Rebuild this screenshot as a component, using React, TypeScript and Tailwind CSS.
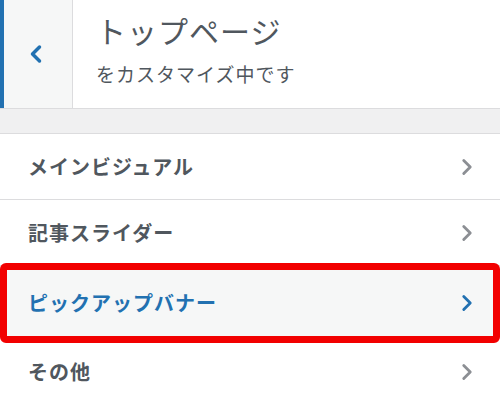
import { ChevronLeft, ChevronRight } from 'lucide-react'

const items = [
  { label: 'メインビジュアル' },
  { label: '記事スライダー' },
]

const jp = { fontFamily: '"Noto Sans CJK JP", "Noto Sans", sans-serif' }

const Row = ({ label }: { label: string }) => (
  <div className="flex h-[66px] items-center justify-between border-b border-[#dcdcde] bg-white pl-[28px] pr-[20px]">
    <span className="text-[20px] font-bold tracking-[1px] text-[#50575e]">{label}</span>
    <ChevronRight className="h-[26px] w-[26px] text-[#8c8f94]" strokeWidth={2.6} />
  </div>
)

export default function App() {
  return (
    <div className="h-[406px] w-[500px] overflow-hidden bg-white" style={jp}>
      {/* header */}
      <div className="flex h-[109px] border-b border-[#dcdcde] bg-white">
        <div className="w-[4px] bg-[#2271b1]" />
        <div className="flex w-[69px] items-center justify-center border-r border-[#dcdcde] bg-[#f6f7f7]">
          <ChevronLeft className="-ml-[4px] h-[28px] w-[28px] text-[#2271b1]" strokeWidth={3} />
        </div>
        <div className="flex flex-col pl-[23px] pt-[10px]">
          <div className="text-[30px] leading-[40px] tracking-[1px] text-[#50575e]">トップページ</div>
          <div className="mt-[12px] text-[19px] leading-[24px] tracking-[1px] text-[#50575e]">をカスタマイズ中です</div>
        </div>
      </div>

      {/* spacer band */}
      <div className="h-[25px] border-b border-[#dcdcde] bg-[#f0f0f1]" />

      {items.map((it) => (
        <Row key={it.label} label={it.label} />
      ))}

      {/* highlighted item */}
      <div className="-mt-[3px] flex h-[80px] items-center justify-between rounded-[6px] border-[7px] border-[#f20000] bg-[#f6f7f7] pl-[21px] pr-[13px]">
        <span className="text-[20px] font-bold tracking-[1px] text-[#2271b1]">ピックアップバナー</span>
        <ChevronRight className="h-[26px] w-[26px] text-[#2271b1]" strokeWidth={2.6} />
      </div>

      <div className="flex h-[58px] items-center justify-between bg-white pl-[28px] pr-[20px]">
        <span className="text-[20px] font-bold tracking-[1px] text-[#50575e]">その他</span>
        <ChevronRight className="h-[26px] w-[26px] text-[#8c8f94]" strokeWidth={2.6} />
      </div>
    </div>
  )
}
